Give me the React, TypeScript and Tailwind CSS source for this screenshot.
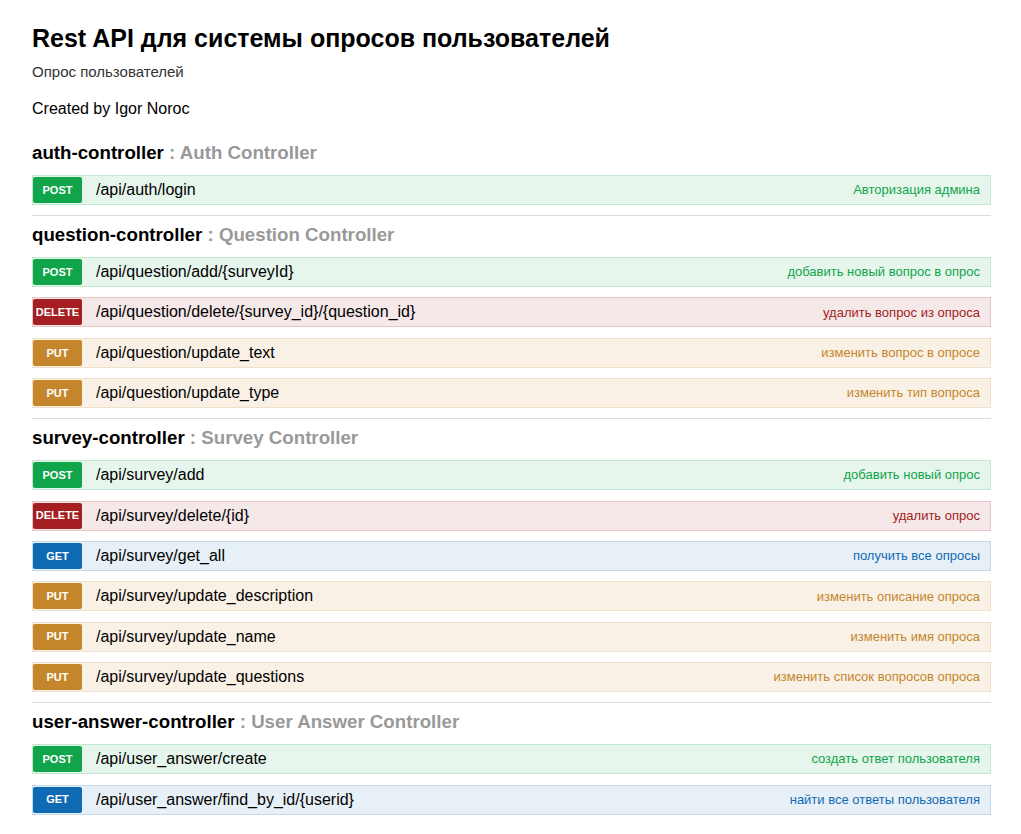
import React from 'react';

type Method = 'POST' | 'GET' | 'PUT' | 'DELETE';

type Endpoint = {
  method: Method;
  path: string;
  summary: string;
};

type Section = {
  name: string;
  description: string;
  endpoints: Endpoint[];
};

const methodStyles: Record<Method, { row: string; badge: string; text: string }> = {
  POST: {
    row: 'bg-[#e7f6ec] border-[#c3e8d1]',
    badge: 'bg-[#10a54a]',
    text: 'text-[#10a54a]',
  },
  GET: {
    row: 'bg-[#e7f0f7] border-[#c3d9ec]',
    badge: 'bg-[#0f6ab4]',
    text: 'text-[#0f6ab4]',
  },
  PUT: {
    row: 'bg-[#f9f1e6] border-[#f0e0ca]',
    badge: 'bg-[#c5862b]',
    text: 'text-[#c5862b]',
  },
  DELETE: {
    row: 'bg-[#f5e8e8] border-[#e8c6c7]',
    badge: 'bg-[#a41e22]',
    text: 'text-[#a41e22]',
  },
};

const sections: Section[] = [
  {
    name: 'auth-controller',
    description: 'Auth Controller',
    endpoints: [{ method: 'POST', path: '/api/auth/login', summary: 'Авторизация админа' }],
  },
  {
    name: 'question-controller',
    description: 'Question Controller',
    endpoints: [
      { method: 'POST', path: '/api/question/add/{surveyId}', summary: 'добавить новый вопрос в опрос' },
      {
        method: 'DELETE',
        path: '/api/question/delete/{survey_id}/{question_id}',
        summary: 'удалить вопрос из опроса',
      },
      { method: 'PUT', path: '/api/question/update_text', summary: 'изменить вопрос в опросе' },
      { method: 'PUT', path: '/api/question/update_type', summary: 'изменить тип вопроса' },
    ],
  },
  {
    name: 'survey-controller',
    description: 'Survey Controller',
    endpoints: [
      { method: 'POST', path: '/api/survey/add', summary: 'добавить новый опрос' },
      { method: 'DELETE', path: '/api/survey/delete/{id}', summary: 'удалить опрос' },
      { method: 'GET', path: '/api/survey/get_all', summary: 'получить все опросы' },
      { method: 'PUT', path: '/api/survey/update_description', summary: 'изменить описание опроса' },
      { method: 'PUT', path: '/api/survey/update_name', summary: 'изменить имя опроса' },
      { method: 'PUT', path: '/api/survey/update_questions', summary: 'изменить список вопросов опроса' },
    ],
  },
  {
    name: 'user-answer-controller',
    description: 'User Answer Controller',
    endpoints: [
      { method: 'POST', path: '/api/user_answer/create', summary: 'создать ответ пользователя' },
      {
        method: 'GET',
        path: '/api/user_answer/find_by_id/{userid}',
        summary: 'найти все ответы пользователя',
      },
    ],
  },
];

function EndpointRow({ endpoint }: { endpoint: Endpoint }) {
  const s = methodStyles[endpoint.method];
  return (
    <div className={`flex h-[30px] items-center border ${s.row}`}>
      <span
        className={`flex h-[26px] w-[49px] items-center justify-center rounded-[2px] text-[11px] font-bold text-white ${s.badge}`}
      >
        {endpoint.method}
      </span>
      <span className="ml-[14px] text-[16px] text-black">{endpoint.path}</span>
      <span className={`ml-auto pr-[10px] text-[13px] ${s.text}`}>{endpoint.summary}</span>
    </div>
  );
}

export default function App() {
  return (
    <div className="min-h-screen bg-white font-['Liberation_Sans',Arial,sans-serif]">
      <div className="ml-[32px] w-[959px] pt-[23px]">
        <h1 className="text-[25px] leading-[30px] font-bold text-black">
          Rest API для системы опросов пользователей
        </h1>
        <p className="mt-[9px] text-[15px] leading-[20px] text-[#333]">Опрос пользователей</p>
        <p className="mt-[17px] text-[16px] leading-[20px] text-black">Created by Igor Noroc</p>

        <div className="mt-[22px]">
          {sections.map((section, i) => (
            <div
              key={section.name}
              className={`${i < sections.length - 1 ? 'border-b border-[#ddd] pb-[10px]' : ''} ${i > 0 ? 'pt-[7px]' : ''}`}
            >
              <h2 className="text-[18.7px] leading-[24px] font-bold">
                <span className="text-black">{section.name}</span>
                <span className="text-[#999]"> : {section.description}</span>
              </h2>
              <div className="mt-[10px] flex flex-col gap-[10.4px]">
                {section.endpoints.map((e) => (
                  <EndpointRow key={e.method + e.path} endpoint={e} />
                ))}
              </div>
            </div>
          ))}
        </div>
      </div>
    </div>
  );
}
